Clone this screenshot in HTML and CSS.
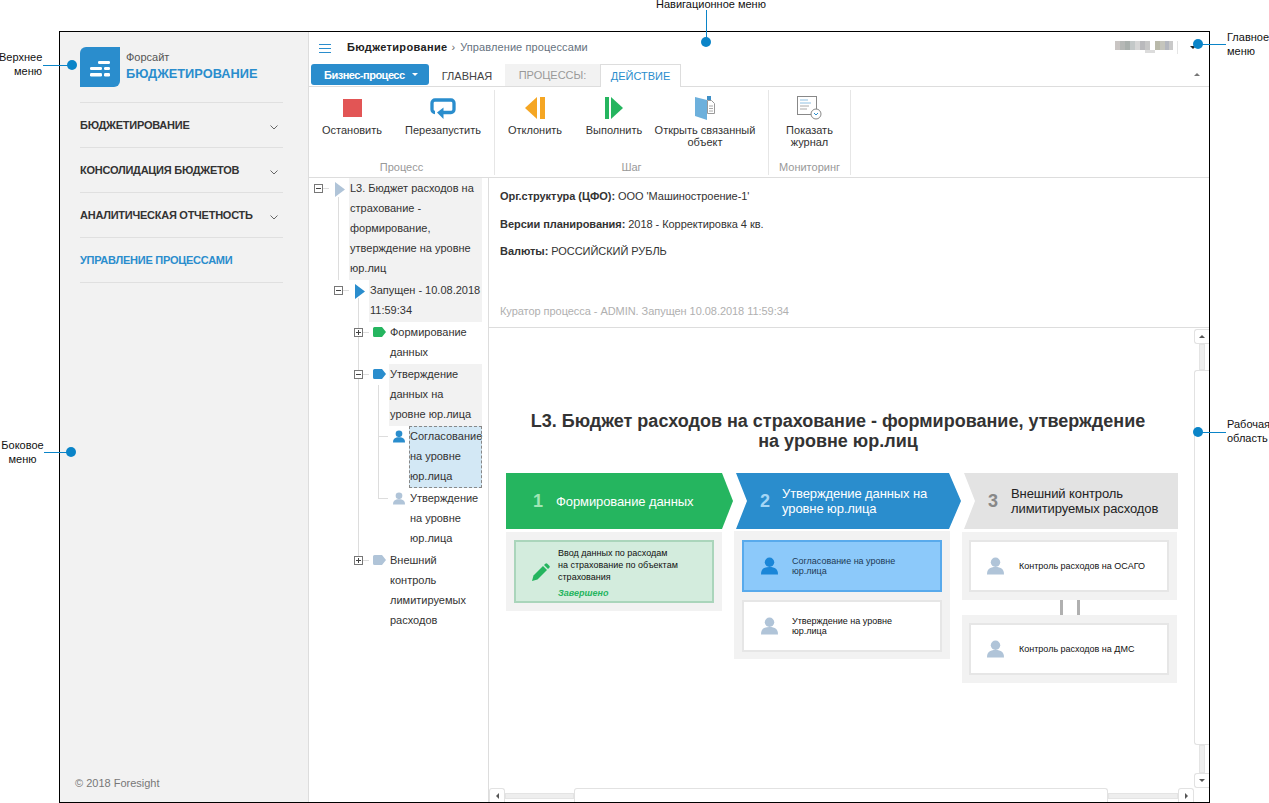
FILE: index.html
```html
<!DOCTYPE html>
<html lang="ru">
<head>
<meta charset="utf-8">
<title>Форсайт. Бюджетирование</title>
<link rel="stylesheet" href="styles.css">
</head>
<body>
<div class="frame">
  <aside class="sidebar">
    <div class="logo">
      <div class="logo-mark">
        <svg width="40" height="40" viewBox="0 0 40 40"><g fill="#fff"><rect x="18" y="14" width="12" height="3" rx="1.2"/><rect x="10" y="20" width="12" height="3" rx="1.2"/><rect x="24" y="20" width="6" height="3" rx="1.2"/><rect x="10" y="26" width="12" height="3.5" rx="1.2"/><rect x="24" y="26" width="6" height="3.5" rx="1.2"/></g></svg>
      </div>
      <div class="logo-text">
        <div class="logo-small">Форсайт</div>
        <div class="logo-big">БЮДЖЕТИРОВАНИЕ</div>
      </div>
    </div>
    <nav class="side-menu">
      <div class="side-item"><span>БЮДЖЕТИРОВАНИЕ</span><svg class="chev" width="8" height="5" viewBox="0 0 8 5"><path d="M.5.5 4 4 7.500.5" fill="none" stroke="#666"/></svg></div>
      <div class="side-item"><span>КОНСОЛИДАЦИЯ БЮДЖЕТОВ</span><svg class="chev" width="8" height="5" viewBox="0 0 8 5"><path d="M.5.5 4 4 7.500.5" fill="none" stroke="#666"/></svg></div>
      <div class="side-item"><span>АНАЛИТИЧЕСКАЯ ОТЧЕТНОСТЬ</span><svg class="chev" width="8" height="5" viewBox="0 0 8 5"><path d="M.5.5 4 4 7.500.5" fill="none" stroke="#666"/></svg></div>
      <div class="side-item active"><span>УПРАВЛЕНИЕ ПРОЦЕССАМИ</span></div>
    </nav>
    <div class="copyright">© 2018 Foresight</div>
  </aside>

  <main class="main">
    <header class="nav">
      <div class="burger"><i></i><i></i><i></i></div>
      <div class="crumb-main">Бюджетирование</div>
      <div class="crumb-sep">›</div>
      <div class="crumb-sub">Управление процессами</div>
      <div class="nav-right">
        <svg class="user-blur" width="58" height="14" viewBox="0 0 58 14"><rect x="0" y="0" width="5" height="9" fill="#c9c5c3"/><rect x="5" y="0" width="5" height="9" fill="#b5b8b6"/><rect x="10" y="0" width="5" height="9" fill="#a9b0ad"/><rect x="15" y="0" width="5" height="9" fill="#c3c8c8"/><rect x="20" y="0" width="5" height="9" fill="#d6d6d6"/><rect x="25" y="0" width="5" height="9" fill="#b9b9bc"/><rect x="30" y="0" width="5" height="9" fill="#c6c6c6"/><rect x="30" y="9" width="10" height="3" fill="#dcdcdc"/><rect x="40" y="0" width="5" height="9" fill="#b9b9a9"/><rect x="45" y="0" width="5" height="9" fill="#c5c5bd"/><rect x="50" y="0" width="4" height="9" fill="#b4b7bf"/><rect x="54" y="0" width="4" height="9" fill="#c9c9c9"/></svg>
        <div class="nav-sep"></div>
        <div class="caret-dark"></div>
      </div>
    </header>

    <div class="tabs">
      <div class="biz-btn"><span>Бизнес-процесс</span><i class="caret-white"></i></div>
      <div class="tab tab-home">ГЛАВНАЯ</div>
      <div class="tab tab-proc">ПРОЦЕССЫ:</div>
      <div class="tab tab-act">ДЕЙСТВИЕ</div>
      <div class="collapse"></div>
    </div>

    <section class="ribbon">
      <div class="group g1">
        <div class="group-btns">
          <div class="rbtn w86"><div class="ricon"><svg width="19" height="18" viewBox="0 0 19 18"><rect width="19" height="18" fill="#e25555"/></svg></div><div class="rlabel">Остановить</div></div>
          <div class="rbtn w96"><div class="ricon"><svg width="26" height="21" viewBox="0 0 26 21"><path d="M5 14.500a3 3 0 0 1-3-3V5a3 3 0 0 1 3-3h16a3 3 0 0 1 3 3v6.500a3 3 0 0 1-3 3H12" fill="none" stroke="#2a8dcd" stroke-width="3.300"/><path d="M7 14.500 13.500 9.500V21z" fill="#2a8dcd"/></svg></div><div class="rlabel">Перезапустить</div></div>
        </div>
        <div class="group-title">Процесс</div>
      </div>
      <div class="group g2">
        <div class="group-btns">
          <div class="rbtn w80"><div class="ricon"><svg width="20" height="22" viewBox="0 0 20 22"><path d="M12 0v22L0 11z" fill="#f5a623"/><rect x="15" width="5" height="22" fill="#f5a623"/></svg></div><div class="rlabel">Отклонить</div></div>
          <div class="rbtn w78"><div class="ricon"><svg width="18" height="22" viewBox="0 0 18 22"><rect width="4" height="22" fill="#25b55f"/><path d="M6 0v22l12-11z" fill="#25b55f"/></svg></div><div class="rlabel">Выполнить</div></div>
          <div class="rbtn w104"><div class="ricon"><svg width="20" height="24" viewBox="0 0 20 24"><path d="M12.500 4.500h4l3 3v10h-7z" fill="#fff" stroke="#999"/><path d="M14 10h4M14 12.500h4M14 15h4" stroke="#aaa"/><path d="M12 0h4v4h-4z" fill="#3f8fc6"/><path d="M0 1l12 3v20L0 20z" fill="#6db0dc"/></svg></div><div class="rlabel">Открыть связанный объект</div></div>
        </div>
        <div class="group-title">Шаг</div>
      </div>
      <div class="group g3">
        <div class="group-btns">
          <div class="rbtn w81"><div class="ricon"><svg width="25" height="24" viewBox="0 0 25 24"><rect x=".5" y=".5" width="19" height="18" fill="#fff" stroke="#888"/><path d="M3 4h8M3 7h11" stroke="#8fc0e2"/><path d="M3 10h9M3 13h7" stroke="#aaa"/><circle cx="19" cy="18" r="5" fill="#fff" stroke="#888"/><path d="M17 17l2 2 2-2" fill="none" stroke="#2a8dcd"/></svg></div><div class="rlabel">Показать журнал</div></div>
        </div>
        <div class="group-title">Мониторинг</div>
      </div>
    </section>

    <div class="content">
      <div class="tree">
        <i class="tl v0"></i><i class="tl v1"></i><i class="tl v2"></i><i class="tl h3a"></i><i class="tl h3b"></i>

        <div class="node l0">
          <div class="slot-exp has"><span class="exp"></span></div>
          <div class="slot-ico"><svg class="i-tri" width="10" height="15" viewBox="0 0 10 15"><path d="M0 0l10 7.500L0 15z" fill="#b0c4d8"/></svg></div>
          <div class="ntext shade">L3. Бюджет расходов на страхование - формирование, утверждение на уровне юр.лиц</div>
        </div>
        <div class="node l1">
          <div class="slot-exp has"><span class="exp"></span></div>
          <div class="slot-ico"><svg class="i-tri" width="10" height="15" viewBox="0 0 10 15"><path d="M0 0l10 7.500L0 15z" fill="#2a8dcd"/></svg></div>
          <div class="ntext shade">Запущен - 10.08.2018 11:59:34</div>
        </div>
        <div class="node l2">
          <div class="slot-exp has"><span class="exp plus"></span></div>
          <div class="slot-ico"><svg class="i-tag" width="13" height="10" viewBox="0 0 13 10"><path d="M1.500 0H9l4 5-4 5H1.500A1.500 1.500 0 0 1 0 8.500v-7A1.500 1.500 0 0 1 1.500 0z" fill="#25b55f"/></svg></div>
          <div class="ntext">Формирование данных</div>
        </div>
        <div class="node l2">
          <div class="slot-exp has"><span class="exp"></span></div>
          <div class="slot-ico"><svg class="i-tag" width="13" height="10" viewBox="0 0 13 10"><path d="M1.500 0H9l4 5-4 5H1.500A1.500 1.500 0 0 1 0 8.500v-7A1.500 1.500 0 0 1 1.500 0z" fill="#2a8dcd"/></svg></div>
          <div class="ntext shade">Утверждение данных на уровне юр.лица</div>
        </div>
        <div class="node l3">
          <div class="slot-exp"></div>
          <div class="slot-ico"><svg class="i-man" width="12" height="13" viewBox="0 0 18 18"><ellipse cx="9" cy="5" rx="5" ry="5" fill="#2a8dcd"/><path d="M0 18c0-6 3-8 9-8s9 2 9 8z" fill="#2a8dcd"/></svg></div>
          <div class="ntext sel">Согласование на уровне юр.лица</div>
        </div>
        <div class="node l3">
          <div class="slot-exp"></div>
          <div class="slot-ico"><svg class="i-man" width="12" height="13" viewBox="0 0 18 18"><ellipse cx="9" cy="5" rx="5" ry="5" fill="#b0c4d8"/><path d="M0 18c0-6 3-8 9-8s9 2 9 8z" fill="#b0c4d8"/></svg></div>
          <div class="ntext">Утверждение на уровне юр.лица</div>
        </div>
        <div class="node l2">
          <div class="slot-exp has"><span class="exp plus"></span></div>
          <div class="slot-ico"><svg class="i-tag" width="13" height="10" viewBox="0 0 13 10"><path d="M1.500 0H9l4 5-4 5H1.500A1.500 1.500 0 0 1 0 8.500v-7A1.500 1.500 0 0 1 1.500 0z" fill="#b0c4d8"/></svg></div>
          <div class="ntext">Внешний контроль лимитируемых расходов</div>
        </div>
      </div>

      <div class="right">
        <div class="info">
          <p><b>Орг.структура (ЦФО):</b> ООО 'Машиностроение-1'</p>
          <p><b>Версии планирования:</b> 2018 - Корректировка 4 кв.</p>
          <p><b>Валюты:</b> РОССИЙСКИЙ РУБЛЬ</p>
          <div class="curator">Куратор процесса - ADMIN. Запущен 10.08.2018 11:59:34</div>
        </div>
        <div class="work">
          <div class="work-row">
            <div class="canvas">
              <h1 class="flow-title">L3. Бюджет расходов на страхование - формирование, утверждение<br>на уровне юр.лиц</h1>
              <div class="flow">
                <div class="col col1">
                  <div class="head head1"><span class="num">1</span><span class="head-text">Формирование данных</span></div>
                  <div class="panel">
                    <div class="card done">
                      <svg class="pencil" width="18" height="18" viewBox="0 0 18 18"><path d="M0 18l1.500-5.500L11 3l4 4-9.500 9.500z" fill="#25b55f"/><path d="M12 2l1.300-1.300a1.400 1.400 0 0 1 2 0l2 2a1.400 1.400 0 0 1 0 2L16 6z" fill="#25b55f"/></svg>
                      <div class="done-text">
                        <div>Ввод данных по расходам<br>на страхование по объектам<br>страхования</div>
                        <div class="done-state">Завершено</div>
                      </div>
                    </div>
                  </div>
                </div>
                <div class="col col2">
                  <div class="head head2"><span class="num">2</span><span class="head-text">Утверждение данных на<br>уровне юр.лица</span></div>
                  <div class="panel">
                    <div class="card cur">
                      <svg class="man" width="17" height="18" viewBox="0 0 18 18"><ellipse cx="9" cy="5" rx="5" ry="5" fill="#1a86d8"/><path d="M0 18c0-6 3-8 9-8s9 2 9 8z" fill="#1a86d8"/></svg>
                      <div class="card-text">Согласование на уровне<br>юр.лица</div>
                    </div>
                    <div class="card">
                      <svg class="man" width="17" height="18" viewBox="0 0 18 18"><ellipse cx="9" cy="5" rx="5" ry="5" fill="#b0c4d8"/><path d="M0 18c0-6 3-8 9-8s9 2 9 8z" fill="#b0c4d8"/></svg>
                      <div class="card-text">Утверждение на уровне<br>юр.лица</div>
                    </div>
                  </div>
                </div>
                <div class="col col3">
                  <div class="head head3"><span class="num">3</span><span class="head-text">Внешний контроль<br>лимитируемых расходов</span></div>
                  <div class="panel">
                    <div class="card">
                      <svg class="man" width="17" height="18" viewBox="0 0 18 18"><ellipse cx="9" cy="5" rx="5" ry="5" fill="#b0c4d8"/><path d="M0 18c0-6 3-8 9-8s9 2 9 8z" fill="#b0c4d8"/></svg>
                      <div class="card-text wide">Контроль расходов на ОСАГО</div>
                    </div>
                  </div>
                  <div class="link"><i></i><i></i></div>
                  <div class="panel">
                    <div class="card">
                      <svg class="man" width="17" height="18" viewBox="0 0 18 18"><ellipse cx="9" cy="5" rx="5" ry="5" fill="#b0c4d8"/><path d="M0 18c0-6 3-8 9-8s9 2 9 8z" fill="#b0c4d8"/></svg>
                      <div class="card-text wide">Контроль расходов на ДМС</div>
                    </div>
                  </div>
                </div>
              </div>
            </div>
            <div class="vscroll">
              <div class="sb-btn"><i class="up"></i></div>
              <div class="vtrack t-a"></div>
              <div class="vthumb"></div>
              <div class="vtrack t-b"></div>
              <div class="sb-btn"><i class="down"></i></div>
            </div>
          </div>
          <div class="hscroll">
            <div class="sb-btn h"><i class="left"></i></div>
            <div class="htrack t-c"></div>
            <div class="hthumb"></div>
            <div class="htrack t-d"></div>
            <div class="sb-btn h"><i class="right-arrow"></i></div>
          </div>
        </div>
      </div>
    </div>
  </main>
</div>

<div class="note n-top">Навигационное меню</div><i class="ln ln-top"></i><i class="dot d-top"></i>
<div class="note n-upper">Верхнее<br>меню</div><i class="ln ln-upper"></i><i class="dot d-upper"></i>
<div class="note n-side">Боковое<br>меню</div><i class="ln ln-side"></i><i class="dot d-side"></i>
<div class="note n-main">Главное<br>меню</div><i class="ln ln-main"></i><i class="dot d-main"></i>
<div class="note n-work">Рабочая<br>область</div><i class="ln ln-work"></i><i class="dot d-work"></i>
</body>
</html>
```
FILE: styles.css
```css
* { box-sizing: border-box; }
html, body { margin: 0; height: 803px; }
body {
  position: relative;
  padding: 31px 0 0 59px;
  overflow: hidden;
  background: #fff;
  color: #333;
  font: 11px/14px "Liberation Sans", Arial, sans-serif;
}
i { display: block; }

.frame {
  display: flex;
  width: 1151px;
  height: 772px;
  border: 1px solid #000;
}

/* Sidebar */
.sidebar {
  display: flex;
  flex-direction: column;
  width: 249px;
  padding: 15px 25px 0 20px;
  background: #f2f2f2;
  border-right: 1px solid #ddd;
}
.logo { display: flex; gap: 6px; height: 56px; border-bottom: 1px solid #e0e0e0; }
.logo-mark { width: 40px; height: 40px; background: #2a8dcd; border-radius: 6px 0 6px 0; }
.logo-mark svg { display: block; }
.logo-text { padding-top: 3px; }
.logo-small { color: #555; line-height: 14px; }
.logo-big { margin-top: 3px; color: #2a8dcd; font-weight: bold; font-size: 12.800px; line-height: 14px; }
.side-item {
  display: flex;
  align-items: center;
  justify-content: space-between;
  height: 45px;
  padding-right: 5px;
  border-bottom: 1px solid #e0e0e0;
  font-weight: bold;
  letter-spacing: -.25px;
  color: #333;
}
.side-item.active { color: #2a8dcd; }
.chev { margin-top: 4px; }
.copyright { margin-top: auto; padding: 0 0 12px; margin-left: -5px; color: #777; }

/* Main */
.main { display: flex; flex-direction: column; flex: 1; min-width: 0; }
.nav { display: flex; align-items: center; height: 32px; padding: 0 13px 2px 10px; }
.burger { width: 12px; margin-right: 16px; }
.burger i { height: 1px; background: #2a8dcd; margin-top: 3px; }
.crumb-main { font-weight: bold; color: #222; letter-spacing: .35px; }
.crumb-sep { margin: 0 5px 0 4px; color: #666; }
.crumb-sub { color: #667280; letter-spacing: .1px; }
.nav-right { display: flex; align-items: center; margin-left: auto; }
.user-blur { display: block; margin-top: 2px; }
.nav-sep { width: 1px; height: 13px; margin: 0 12px 0 4px; background: #e5e5e5; }
.caret-dark { width: 0; height: 0; border: 3px solid transparent; border-top: 3px solid #222; border-bottom: 0; }

.tabs { display: flex; align-items: flex-start; height: 23px; padding-left: 2px; border-bottom: 1px solid #ddd; }
.biz-btn {
  display: flex;
  align-items: center;
  width: 118px;
  height: 21px;
  padding-left: 13px;
  background: #2a8dcd;
  border-radius: 3px;
  color: #fff;
  font-weight: bold;
  letter-spacing: -.5px;
}
.caret-white { margin-left: 7px; border: 3px solid transparent; border-top: 3px solid #fff; border-bottom: 0; }
.tab { display: flex; align-items: center; justify-content: center; height: 23px; }
.tab-home { width: 76px; color: #444; }
.tab-proc { width: 95px; background: #f2f2f2; color: #999; height: 22px; }
.tab-act { width: 81px; background: #fff; color: #2a8dcd; border: 1px solid #ddd; border-bottom: 0; }
.collapse { margin: 9px 9px 0 auto; border: 3px solid transparent; border-bottom: 3px solid #777; border-top: 0; }

.ribbon { display: flex; height: 91px; border-bottom: 1px solid #ddd; }
.group {
  display: flex;
  flex-direction: column;
  justify-content: space-between;
  margin: 3px 0 2px;
  padding-top: 6px;
  border-right: 1px solid #e6e6e6;
}
.g1 { width: 186px; }
.g2 { width: 274px; }
.g3 { width: 82px; }
.group-btns { display: flex; }
.rbtn { text-align: center; color: #333; line-height: 12px; }
.w86 { width: 86px; }
.w96 { width: 96px; }
.w80 { width: 80px; }
.w78 { width: 78px; }
.w104 { width: 104px; padding: 0 1px; }
.w81 { width: 81px; }
.ricon { display: flex; justify-content: center; align-items: center; height: 24px; margin-bottom: 4px; }
.group-title { height: 14px; margin-bottom: 1px; color: #999; text-align: center; }

.content { display: flex; flex: 1; min-height: 0; }

/* Tree */
.tree { position: relative; width: 180px; padding-right: 6px; border-right: 1px solid #ddd; line-height: 20px; }
.node { display: flex; }
.l0 { padding-left: 5px; }
.l1 { padding-left: 25px; }
.l2 { padding-left: 45px; }
.l3 { padding-left: 65px; }
.slot-exp { position: relative; flex: none; width: 19px; height: 20px; }
.slot-exp.has::after { content: ""; position: absolute; left: 9px; top: 10px; width: 6px; height: 1px; background: #ddd; }
.exp { position: absolute; left: 0; top: 6px; width: 9px; height: 9px; background: #fff; border: 1px solid #777; }
.exp::before { content: ""; position: absolute; left: 1px; right: 1px; top: 3px; height: 1px; background: #444; }
.exp.plus::after { content: ""; position: absolute; top: 1px; bottom: 1px; left: 3px; width: 1px; background: #444; }
.slot-ico { flex: none; display: flex; align-items: flex-start; width: 16px; height: 20px; padding-top: 5px; }
.i-tri { display: block; margin: -1px 0 0 2px; }
.i-tag { display: block; }
.i-man { display: block; margin-top: -1px; }
.ntext { flex: 1; min-width: 0; padding: 0 0 2px 1px; }
.shade { background: #f2f2f2; }
.sel { background: #d3e8f5; outline: 1px dashed #888; outline-offset: -1px; }
.tl { position: absolute; background: #ddd; }
.v0 { left: 29px; top: 19px; width: 1px; height: 83px; }
.v1 { left: 49px; top: 120px; width: 1px; height: 262px; }
.v2 { left: 69px; top: 207px; width: 1px; height: 113px; }
.h3a { left: 69px; top: 258px; width: 10px; height: 1px; }
.h3b { left: 69px; top: 320px; width: 10px; height: 1px; }

/* Right */
.right { display: flex; flex-direction: column; flex: 1; min-width: 0; }
.info { display: flex; flex-direction: column; height: 150px; padding: 11px 11px 9px; border-bottom: 1px solid #ddd; letter-spacing: -.05px; }
.info p { margin: 0 0 13.500px; }
.curator { margin-top: auto; color: #b0b0b0; }

.work { display: flex; flex-direction: column; flex: 1; min-height: 0; }
.work-row { display: flex; flex: 1; min-height: 0; }
.canvas { flex: 1; min-width: 0; padding: 83px 0 0 17px; }
.flow-title {
  width: 664px;
  margin: 0 0 22px;
  color: #333;
  font-size: 18px;
  line-height: 20px;
  font-weight: bold;
  text-align: center;
}
.flow { display: flex; }
.col { flex: none; }
.col1 { width: 228px; }
.col2 { width: 228px; }
.col3 { width: 216px; }
.head { display: flex; align-items: center; height: 56px; font-size: 13px; line-height: 15px; letter-spacing: -.1px; }
.num { font-size: 18px; font-weight: bold; letter-spacing: 0; }
.head1 { width: 227px; padding-left: 27px; color: #fff; background: #25b55f; clip-path: polygon(0 0, 216px 0, 227px 50%, 216px 100%, 0 100%); }
.head1 .num { color: #a0e6b4; margin-right: 13px; }
.head2 { width: 225px; margin-left: 2px; padding-left: 24px; color: #fff; background: #2a8dcd; clip-path: polygon(0 0, 213px 0, 225px 50%, 213px 100%, 0 100%, 11px 50%); }
.head2 .num { color: #a5d6f5; margin-right: 12px; }
.head3 { width: 214px; margin-left: 2px; padding-left: 24px; color: #222; background: #e3e3e3; clip-path: polygon(0 0, 100% 0, 100% 100%, 0 100%, 11px 50%); }
.head3 .num { color: #888; margin-right: 13px; }

.panel { display: flex; flex-direction: column; gap: 8px; width: 216px; padding: 8px; background: #f2f2f2; }
.col1 .panel { margin-top: 3px; }
.col2 .panel { margin-top: 2px; padding-top: 9px; padding-bottom: 7px; }
.col3 .panel { width: 215px; padding-left: 7px; }
.col3 .head + .panel { margin-top: 3px; }
.card {
  display: flex;
  align-items: center;
  height: 52px;
  padding-left: 17px;
  background: #fff;
  border: 2px solid #e6e6e6;
  color: #111;
  font-size: 9px;
  line-height: 10px;
}
.col3 .card { padding-left: 16px; }
.card.done { height: 63px; padding-left: 16px; background: #d3ecdd; border-color: #aad5bb; }
.card.cur { background: #8cc9fa; border-color: #58aaec; color: #1d3a55; }
.man { flex: none; margin-top: -1px; }
.pencil { flex: none; margin-right: 8px; }
.done-text { line-height: 12px; padding-top: 3px; }
.done-state { margin-top: 4px; color: #25b55f; font-style: italic; font-weight: bold; }
.card-text { margin-left: 14px; }
.card-text.wide { margin-left: 15px; }
.link { display: flex; justify-content: center; gap: 14px; width: 215px; height: 15px; }
.link i { width: 3px; background: #b0b0b0; }

/* Scrollbars */
.vscroll { display: flex; flex-direction: column; flex: none; width: 15px; padding-top: 1px; }
.sb-btn { display: flex; align-items: center; justify-content: center; flex: none; height: 15px; background: #fff; border: 1px solid #e2e2e2; border-right: 0; border-radius: 3px 0 0 3px; }
.vtrack { width: 6px; margin-left: 5px; background: #eee; border: 1px solid #e4e4e4; }
.t-a { height: 26px; }
.t-b { height: 28px; }
.vthumb { flex: 1; background: #fff; border: 1px solid #e2e2e2; border-right: 0; border-radius: 3px 0 0 3px; }
.hscroll { display: flex; align-items: center; flex: none; height: 14px; padding-right: 15px; }
.sb-btn.h { width: 16px; height: 14px; border: 1px solid #e2e2e2; border-bottom: 0; border-radius: 3px 3px 0 0; }
.htrack { height: 6px; margin-top: 1px; background: #eee; border: 1px solid #e4e4e4; }
.t-c { width: 69px; }
.t-d { width: 70px; }
.hthumb { flex: 1; align-self: stretch; background: #fff; border: 1px solid #e2e2e2; border-bottom: 0; border-radius: 3px 3px 0 0; }
.up { border: 3px solid transparent; border-bottom: 3px solid #555; border-top: 0; }
.down { border: 3px solid transparent; border-top: 3px solid #555; border-bottom: 0; }
.left { border: 3px solid transparent; border-right: 3px solid #555; border-left: 0; }
.right-arrow { border: 3px solid transparent; border-left: 3px solid #555; border-right: 0; }

/* Callouts over the screenshot */
.note { position: absolute; color: #111; line-height: 13.500px; }
.dot { position: absolute; width: 10px; height: 10px; border-radius: 50%; background: #0a84c8; }
.ln { position: absolute; background: #0a84c8; }
.n-top { left: 656px; top: -2px; }
.ln-top { left: 706px; top: 10px; width: 1px; height: 30px; }
.d-top { left: 701px; top: 37px; }
.n-upper { left: -1px; top: 51px; width: 43px; text-align: right; }
.ln-upper { left: 43px; top: 65px; width: 26px; height: 1px; }
.d-upper { left: 67px; top: 60px; }
.n-side { left: 1px; top: 439px; width: 43px; text-align: center; }
.ln-side { left: 44px; top: 452px; width: 24px; height: 1px; }
.d-side { left: 66px; top: 447px; }
.n-main { left: 1227px; top: 31px; }
.ln-main { left: 1200px; top: 44px; width: 26px; height: 1px; }
.d-main { left: 1193px; top: 39px; }
.n-work { left: 1227px; top: 418px; }
.ln-work { left: 1200px; top: 432px; width: 26px; height: 1px; }
.d-work { left: 1193px; top: 427px; }
```
